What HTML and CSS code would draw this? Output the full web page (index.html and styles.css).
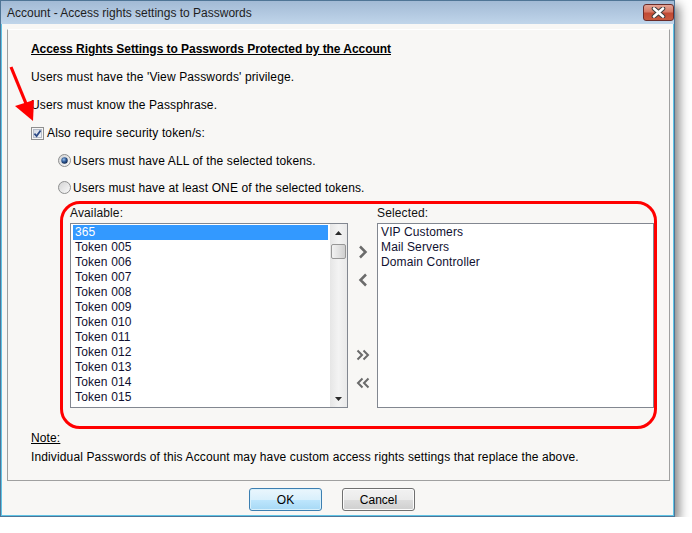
FILE: index.html
```html
<!DOCTYPE html>
<html lang="en">
<head>
  <meta charset="UTF-8">
  <title>Account - Access rights settings to Passwords</title>
  <link rel="stylesheet" href="styles.css">
</head>
<body>
  <div class="window">
    <div class="titlebar">
      <span class="title">Account - Access rights settings to Passwords</span>
      <div class="close-btn">
        <svg width="17" height="11" viewBox="0 0 17 11">
          <path d="M4 1.5 L13 9.5 M13 1.5 L4 9.5" stroke="#3c3c3c" stroke-width="4.6" stroke-linecap="round"/>
          <path d="M4 1.5 L13 9.5 M13 1.5 L4 9.5" stroke="#fff" stroke-width="2.6" stroke-linecap="round"/>
        </svg>
      </div>
    </div>

    <div class="client">
      <div class="panel">
        <div class="row heading">Access Rights Settings to Passwords Protected by the Account</div>
        <div class="row">Users must have the 'View Passwords' privilege.</div>
        <div class="row">Users must know the Passphrase.</div>
        <div class="row">
          <svg class="check" width="13" height="13" viewBox="0 0 13 13">
            <defs>
              <linearGradient id="cbg" x1="0" y1="0" x2="1" y2="1">
                <stop offset="0" stop-color="#cfd6e2"/>
                <stop offset="1" stop-color="#f4f6f9"/>
              </linearGradient>
            </defs>
            <rect x="0.5" y="0.5" width="12" height="12" fill="#f6f6f6" stroke="#8e8f8f"/>
            <rect x="2.5" y="2.5" width="8" height="8" fill="url(#cbg)" stroke="#b5bcc9"/>
            <path d="M3.4 6.6 L5.6 9 L9.6 3.4" fill="none" stroke="#2c4a86" stroke-width="1.8"/>
          </svg>
          <span>Also require security token/s:</span>
        </div>
        <div class="row short indent">
          <svg class="radio" width="13" height="13" viewBox="0 0 13 13">
            <defs>
              <linearGradient id="rbg" x1="0" y1="0" x2="1" y2="1">
                <stop offset="0" stop-color="#d2d2d2"/>
                <stop offset="1" stop-color="#fbfbfb"/>
              </linearGradient>
              <radialGradient id="rdot" cx="0.4" cy="0.35" r="0.7">
                <stop offset="0" stop-color="#9dc2ea"/>
                <stop offset="0.5" stop-color="#2f5b97"/>
                <stop offset="1" stop-color="#0c1f45"/>
              </radialGradient>
            </defs>
            <circle cx="6.5" cy="6.5" r="6" fill="url(#rbg)" stroke="#8e8f8f"/>
            <circle cx="6.5" cy="6.5" r="3.2" fill="url(#rdot)"/>
          </svg>
          <span>Users must have ALL of the selected tokens.</span>
        </div>
        <div class="row short indent">
          <svg class="radio" width="13" height="13" viewBox="0 0 13 13">
            <circle cx="6.5" cy="6.5" r="6" fill="url(#rbg)" stroke="#8e8f8f"/>
          </svg>
          <span>Users must have at least ONE of the selected tokens.</span>
        </div>

        <div class="token-box">
          <div class="list-label">Available:</div>
          <div></div>
          <div class="list-label">Selected:</div>

          <div class="listbox">
            <div class="items">
              <div class="item selected">365</div>
              <div class="item">Token 005</div>
              <div class="item">Token 006</div>
              <div class="item">Token 007</div>
              <div class="item">Token 008</div>
              <div class="item">Token 009</div>
              <div class="item">Token 010</div>
              <div class="item">Token 011</div>
              <div class="item">Token 012</div>
              <div class="item">Token 013</div>
              <div class="item">Token 014</div>
              <div class="item">Token 015</div>
            </div>
            <div class="scrollbar">
              <div class="scroll-btn">
                <svg width="7" height="4" viewBox="0 0 7 4"><path d="M0 4 L3.5 0 L7 4 Z" fill="#2a2a2a"/></svg>
              </div>
              <div class="track"><div class="thumb"></div></div>
              <div class="scroll-btn">
                <svg width="7" height="4" viewBox="0 0 7 4"><path d="M0 0 L3.5 4 L7 0 Z" fill="#2a2a2a"/></svg>
              </div>
            </div>
          </div>

          <div class="movers">
            <svg class="mover" width="16" height="16" viewBox="0 0 16 16"><path d="M5 2.5 L10.5 8 L5 13.5" /></svg>
            <svg class="mover" width="16" height="16" viewBox="0 0 16 16"><path d="M11 2.5 L5.5 8 L11 13.5" /></svg>
            <svg class="mover gap" width="16" height="16" viewBox="0 0 16 16"><path class="thin" d="M2.5 3.5 L7 8 L2.5 12.5 M8.5 3.5 L13 8 L8.5 12.5" /></svg>
            <svg class="mover" width="16" height="16" viewBox="0 0 16 16"><path class="thin" d="M7.5 3.5 L3 8 L7.5 12.5 M13.5 3.5 L9 8 L13.5 12.5" /></svg>
          </div>

          <div class="listbox">
            <div class="items chosen">
              <div class="item">VIP Customers</div>
              <div class="item">Mail Servers</div>
              <div class="item">Domain Controller</div>
            </div>
          </div>
        </div>

        <div class="note-title">Note:</div>
        <div class="note">Individual Passwords of this Account may have custom access rights settings that replace the above.</div>
      </div>

      <div class="footer">
        <button class="btn btn-default">OK</button>
        <button class="btn">Cancel</button>
      </div>
    </div>
  </div>

  <!-- red annotation arrow -->
  <svg class="pointer" width="40" height="130" viewBox="0 0 40 130">
    <path d="M11 67 L27 106" stroke="#ff0000" stroke-width="3.2" fill="none"/>
    <path d="M33 121 L15 106 L34 100 Z" fill="#ff0000"/>
  </svg>
</body>
</html>
```

FILE: styles.css
```css
body {
  margin: 0;
  font-family: "Liberation Sans", Arial, sans-serif;
  font-size: 12px;
  letter-spacing: 0.13px;
  background-color: #fff;
  color: #000;
}
.window {
  width: 675px;
  box-sizing: border-box;
  border: 1px solid #4f7596;
  background: #bfd4ea;
  box-shadow: 4px 5px 10px rgba(0, 0, 0, 0.5);
}
.titlebar {
  height: 23px;
  display: flex;
  align-items: flex-start;
  background: linear-gradient(#a2bad5, #c0d5ea);
}
.title {
  line-height: 25px;
  padding-left: 6px;
  letter-spacing: 0;
  color: #1e1e1e;
}
.close-btn {
  margin: 3px 0 0 auto;
  width: 31px;
  height: 17px;
  box-sizing: border-box;
  border: 1px solid #6a2c2a;
  border-radius: 3px;
  background: linear-gradient(#e4a495 0%, #d77a66 45%, #c24a34 55%, #c85a3f 100%);
  display: flex;
  align-items: center;
  justify-content: center;
}
.client {
  background: #f8f7f5;
  border: 1px solid #5fc4e6;
  border-top: 0;
  padding: 5px 3px 0 5px;
}
.panel {
  border: 1px solid #a0a0a0;
  border-top-color: #ffffff;
  padding: 5px 0 13px 23px;
}
.row {
  height: 28px;
  display: flex;
  align-items: center;
}
.row.short {
  height: 27px;
}
.row.indent {
  padding-left: 27px;
}
.heading {
  font-weight: bold;
  text-decoration: underline;
  letter-spacing: -0.05px;
}
.check {
  margin-right: 3px;
}
.radio {
  margin-right: 2px;
}
.token-box {
  margin-left: 29px;
  width: 597px;
  height: 228px;
  box-sizing: border-box;
  border: 3px solid #ff0000;
  border-radius: 20px;
  padding: 2px 0 0 7px;
  display: grid;
  grid-template-columns: 278px 29px 277px;
  grid-template-rows: 17px 185px;
}
.list-label {
  line-height: 14px;
  color: #111;
}
.listbox {
  border: 1px solid #828790;
  background: #fff;
  display: flex;
}
.items {
  flex: 1;
  padding: 1px 2px;
}
.items.chosen {
  padding-left: 1px;
}
.item {
  height: 15px;
  line-height: 15px;
  padding-left: 2px;
  white-space: nowrap;
  color: #101030;
}
.item.selected {
  background: #3399ff;
  color: #fff;
}
.scrollbar {
  width: 17px;
  display: flex;
  flex-direction: column;
  background: linear-gradient(90deg, #e6e6e6, #f3f3f3 50%, #e9e9e9);
}
.scroll-btn {
  height: 17px;
  display: flex;
  align-items: center;
  justify-content: center;
}
.track {
  flex: 1;
  padding: 3px 1px 0 1px;
}
.thumb {
  height: 15px;
  box-sizing: border-box;
  border: 1px solid #979797;
  border-radius: 2px;
  background: linear-gradient(90deg, #f2f2f2, #e2e2e2 50%, #cfcfcf);
}
.movers {
  display: flex;
  flex-direction: column;
  align-items: center;
  padding-top: 21px;
  gap: 12px;
}
.mover path {
  fill: none;
  stroke: #6b6b6b;
  stroke-width: 2.5;
}
.mover path.thin {
  stroke-width: 2;
}
.mover.gap {
  margin-top: 47px;
}
.note-title {
  line-height: 18px;
  text-decoration: underline;
}
.note {
  line-height: 20px;
}
.footer {
  display: flex;
  gap: 20px;
  padding: 7px 0 4px 242px;
}
.btn {
  width: 73px;
  height: 23px;
  margin: 0;
  font-family: "Liberation Sans", Arial, sans-serif;
  font-size: 12px;
  color: #000;
  border: 1px solid #707070;
  border-radius: 3px;
  background: linear-gradient(#f2f2f2 0%, #ebebeb 50%, #dddddd 51%, #cfcfcf 100%);
  box-shadow: inset 0 0 0 1px #fcfcfc;
  padding: 0;
}
.btn-default {
  border-color: #3c7fb1;
  background: linear-gradient(#eaf6fd 0%, #d9f0fc 50%, #bee6fd 51%, #a7d9f5 100%);
  box-shadow: inset 0 0 0 1px #d8f0fb;
}
.pointer {
  position: absolute;
  left: 0;
  top: 0;
}
```
